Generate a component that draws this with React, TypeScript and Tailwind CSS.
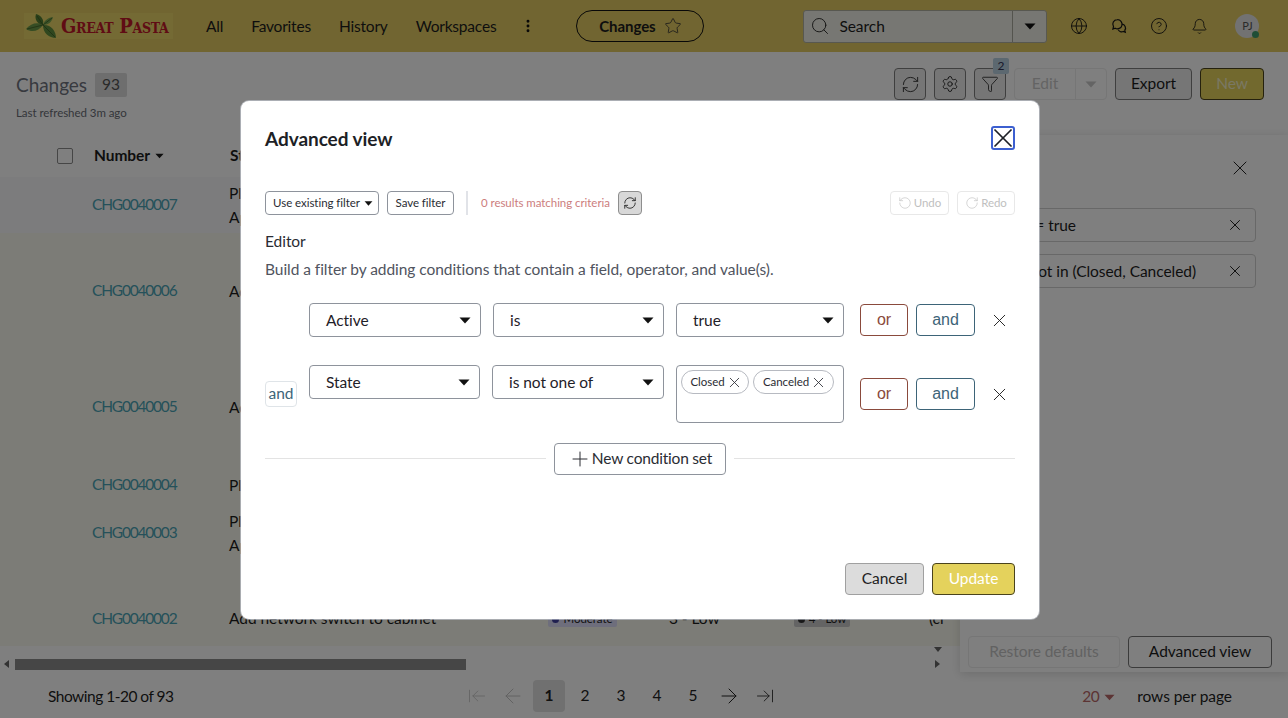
import React from 'react';
import {
  ArrowLeft,
  ArrowLeftToLine,
  ArrowRight,
  ArrowRightToLine,
  Bell,
  CircleHelp,
  EllipsisVertical,
  Funnel,
  Globe,
  Plus,
  RefreshCw,
  RotateCcw,
  RotateCw,
  Search,
  Settings,
  Star,
  X,
} from 'lucide-react';

const Caret = ({ className = '' }: { className?: string }) => (
  <svg width="12" height="7" viewBox="0 0 12 7" className={className}>
    <path d="M0.5 0.5h11L6 6.5z" fill="currentColor" />
  </svg>
);

const Logo = () => (
  <div className="flex h-[26px] w-[149px] items-center bg-[#e8d468]">
    <svg width="34" height="26" viewBox="0 0 34 26" className="ml-[1px] shrink-0">
      <path d="M1 16C6 10 13 9 18 12C14 18 7 20 1 16z" fill="#6c9a48" />
      <path d="M11 1C17 3 19 7 18 12C13 11 9 7 11 1z" fill="#527f34" />
      <path d="M28 4C27 9 23 12 18 12C19 8 22 5 28 4z" fill="#76a450" />
      <path d="M18 12C25 11 31 17 31 25C24 25 18 20 18 12z" fill="#5f8e3e" />
      <path d="M2 16L18 12L30 24M18 12L12 3M18 12L27 5" stroke="#38591f" strokeWidth="0.7" fill="none" />
    </svg>
    <span className="ml-[2px] font-['DejaVu_Serif_Condensed','Liberation_Serif',serif] text-[20px] leading-none font-bold tracking-[-0.3px] whitespace-nowrap text-[#c01828] [font-variant:small-caps]">
      Great Pasta
    </span>
  </div>
);

const NavLink = ({ children }: { children: React.ReactNode }) => (
  <span className="leading-6 text-[#1d1d1d]">{children}</span>
);

const HeaderIcon = ({ children }: { children: React.ReactNode }) => (
  <span className="flex h-4 w-4 items-center justify-center text-[#141414]">{children}</span>
);

const ChatIcon = () => (
  <svg width="16" height="16" viewBox="0 0 16 16" fill="none" stroke="#141414" strokeWidth="1.2" className="shrink-0">
    <path d="M6.3 1.6a4.6 4.6 0 0 0-3.8 7.1L1.9 11l2.3-.8a4.6 4.6 0 1 0 2.1-8.6z" />
    <path d="M11 6.2a3.8 3.8 0 0 1 2.8 6l.5 2-2-.7a3.8 3.8 0 0 1-5-1.8" />
  </svg>
);

const IconButton = ({ children }: { children: React.ReactNode }) => (
  <button className="flex h-8 w-8 items-center justify-center rounded-[4px] border border-[#7e7e7e] bg-[#ededed] text-[#222]">
    {children}
  </button>
);

// Row text sits mostly behind the dialog, only the first letters show
const rows = [
  { num: 'CHG0040007', h: 'h-[56px] bg-[#f8f8fa]', lines: ['Plan', 'App'] },
  { num: 'CHG0040006', h: 'h-[116px] bg-[#f9f9ee]', lines: ['Add'] },
  { num: 'CHG0040005', h: 'h-[116px] bg-[#f9f9ee]', lines: ['Add'] },
  { num: 'CHG0040004', h: 'h-[40px] bg-[#f9f9ee]', lines: ['Plan'] },
  { num: 'CHG0040003', h: 'h-[56px] bg-[#f9f9ee]', lines: ['Plan', 'App'] },
];

const SelectBox = ({ label, className }: { label: string; className: string }) => (
  <div className={`flex h-[34px] shrink-0 items-center justify-between rounded-[4px] border border-[#8e939c] bg-white pr-[9px] pl-4 text-[#1f2128] ${className}`}>
    <span className="pt-[2px]">{label}</span>
    <Caret className="text-[#111]" />
  </div>
);

const OrAnd = () => (
  <div className="ml-4 flex shrink-0 gap-2 font-['Liberation_Sans',sans-serif] text-[16px] tracking-normal">
    <button className="h-8 w-12 rounded-[4px] border border-[#8a4a3c] text-[#8a4a3c]">or</button>
    <button className="h-8 w-[59px] rounded-[4px] border border-[#3d6478] text-[#3d6478]">and</button>
  </div>
);

const RemoveRow = () => (
  <button className="ml-4 flex h-4 w-4 items-center justify-center text-[#222]">
    <X size={21} strokeWidth={1.1} className="shrink-0" />
  </button>
);

const Chip = ({ label, className }: { label: string; className: string }) => (
  <span className={`flex h-6 items-center justify-center rounded-full border border-[#b7bac1] text-[11.5px] text-[#2a2c33] ${className}`}>
    {label}
    <X size={17} strokeWidth={1.2} className="-mr-[3px] ml-[1px] shrink-0" />
  </span>
);

export default function App() {
  return (
    <div className="relative flex h-[718px] w-full flex-col overflow-hidden bg-white font-['Lato',sans-serif] text-[15.5px] tracking-[-0.05px] text-[#1d1d1d]">
      {/* Top bar */}
      <header className="flex h-[52px] shrink-0 items-center bg-[#e2ca62] pl-6">
        <Logo />
        <nav className="ml-[33px] flex items-center gap-7 tracking-[-0.2px]">
          <NavLink>All</NavLink>
          <NavLink>Favorites</NavLink>
          <NavLink>History</NavLink>
          <NavLink>Workspaces</NavLink>
          <EllipsisVertical size={16} strokeWidth={2.4} className="-ml-[4px] text-[#111]" />
        </nav>
        <div className="ml-10 flex h-[32px] w-[128px] items-center justify-center gap-2 rounded-full border border-[#111] text-[15px] font-bold">
          Changes
          <Star size={18} strokeWidth={1.1} className="text-[#333]" />
        </div>
        <div className="ml-[99px] flex h-[33px] w-[244px] items-center rounded-[3px] border border-[#b0b0a0] bg-[#efefe6]">
          <Search size={20} strokeWidth={1.1} className="ml-[6px] text-[#222]" />
          <span className="ml-[9px] flex-1 pt-[2px]">Search</span>
          <div className="flex h-full w-[34px] items-center justify-center border-l border-[#a9a99c]">
            <Caret className="text-[#111]" />
          </div>
        </div>
        <div className="ml-6 flex items-center gap-6">
          <HeaderIcon>
            <Globe size={18} strokeWidth={1.2} className="shrink-0" />
          </HeaderIcon>
          <HeaderIcon>
            <ChatIcon />
          </HeaderIcon>
          <HeaderIcon>
            <CircleHelp size={18} strokeWidth={1.2} className="shrink-0" />
          </HeaderIcon>
          <HeaderIcon>
            <Bell size={17} strokeWidth={1.2} className="shrink-0" />
          </HeaderIcon>
        </div>
        <div className="relative ml-7 flex h-6 w-6 items-center justify-center rounded-full bg-[#e4e4e4] text-[11px] text-[#555]">
          PJ
          <span className="absolute right-0 bottom-0 h-[7px] w-[7px] rounded-full bg-[#3f9c6c]" />
        </div>
      </header>

      {/* Page heading */}
      <div className="flex h-[83px] shrink-0 items-start justify-between pt-4 pr-6 pl-4">
        <div>
          <div className="mt-[5px] flex items-center gap-2">
            <span className="text-[19px] leading-6 text-[#70747e]">Changes</span>
            <span className="flex h-6 w-8 items-center justify-center rounded-[2px] bg-[#dcdcdc] text-[#555]">93</span>
          </div>
          <p className="mt-2 text-[11.5px] leading-4 text-[#6a6d75]">Last refreshed 3m ago</p>
        </div>
        <div className="flex items-center gap-2">
          <IconButton>
            <RefreshCw size={19} strokeWidth={1.1} />
          </IconButton>
          <IconButton>
            <Settings size={18} strokeWidth={1.2} />
          </IconButton>
          <div className="relative">
            <IconButton>
              <Funnel size={18} strokeWidth={1.1} />
            </IconButton>
            <span className="absolute -top-[10px] left-[19px] flex h-4 w-4 items-center justify-center rounded-[2px] bg-[#b8d0e0] text-[12px] text-[#335]">2</span>
          </div>
          <div className="flex h-8 w-[93px] items-center rounded-[4px] border border-[#ececec] text-[#c8c8c8]">
            <span className="w-[60px] text-center">Edit</span>
            <div className="flex h-full flex-1 items-center justify-center border-l border-[#ececec]">
              <Caret className="text-[#c8c8c8]" />
            </div>
          </div>
          <button className="h-8 w-[77px] rounded-[4px] border border-[#7e7e7e] bg-[#ededed]">Export</button>
          <button className="h-8 w-16 rounded-[4px] border border-[#4a431c] bg-[#e4d25c] text-[#f4f0c8]">New</button>
        </div>
      </div>

      {/* Table */}
      <div className="relative flex-1">
        <div className="flex h-[42px] items-center pl-[57px]">
          <span className="h-4 w-4 rounded-[2px] border border-[#8c8c8c] bg-white" />
          <span className="ml-[21px] flex items-center gap-[5px] font-bold">
            Number <Caret className="h-[6px] w-[9px]" />
          </span>
          <span className="ml-[66px] font-bold">State</span>
        </div>
        {rows.map(row => (
          <div key={row.num} className={`flex items-center pl-[92px] ${row.h}`}>
            <span className="w-[137px] tracking-[-1.2px] text-[#4aa3b5]">{row.num}</span>
            <div className="leading-6">
              {row.lines.map(line => (
                <div key={line}>{line}</div>
              ))}
            </div>
          </div>
        ))}
        <div className="flex h-[85px] items-center bg-[#f9f9ee] pt-[31px] pl-[92px]">
          <span className="w-[137px] tracking-[-1.2px] text-[#4aa3b5]">CHG0040002</span>
          <span className="w-[319px] whitespace-nowrap">Add network switch to cabinet</span>
          <span className="flex h-4 w-[69px] items-center justify-center gap-1 rounded-[2px] bg-[#dcdcf8] text-[11.5px]">
            <span className="h-[7px] w-[7px] rounded-full bg-[#4040a0]" /> Moderate
          </span>
          <span className="ml-[52px] w-[125px] whitespace-nowrap">3 - Low</span>
          <span className="flex h-4 w-[56px] items-center justify-center gap-1 rounded-[2px] bg-[#c8c8c8] text-[11.5px]">
            <span className="h-[7px] w-[7px] rounded-full bg-[#333]" /> 4 - Low
          </span>
          <span className="ml-[79px]">(cr</span>
        </div>

        {/* Horizontal scrollbar */}
        <div className="relative flex h-[26px] items-end pb-[2px]">
          <svg width="6" height="8" viewBox="0 0 6 8" className="absolute bottom-[4px] left-[4px] text-[#666]">
            <path d="M5 0v8L0 4z" fill="currentColor" />
          </svg>
          <div className="ml-[15px] h-[11px] w-[451px] bg-[#8c8c8c]" />
          <svg width="8" height="6" viewBox="0 0 8 6" className="absolute top-[1px] left-[934px] text-[#666]">
            <path d="M0 0h8L4 5z" fill="currentColor" />
          </svg>
          <svg width="6" height="8" viewBox="0 0 6 8" className="absolute bottom-[4px] left-[935px] text-[#666]">
            <path d="M0 0v8l5-4z" fill="currentColor" />
          </svg>
        </div>

        {/* Filter side panel */}
        <aside className="absolute top-0 right-0 bottom-0 flex w-[328px] flex-col bg-white pr-4 pl-2 shadow-[0_2px_10px_rgba(0,0,0,0.15)]">
          <X size={24} strokeWidth={1} className="mt-[21px] mr-5 self-end text-[#222]" />
          <div className="mt-7 mr-4 flex h-[34px] items-center justify-end rounded-[4px] border border-[#d0d0d0] pr-[11px]">
            <span className="mr-[150px] pt-[2px]">Active = true</span>
            <X size={18} strokeWidth={1.3} />
          </div>
          <div className="mt-3 mr-4 flex h-[34px] items-center justify-end rounded-[4px] border border-[#d0d0d0] pr-[11px]">
            <span className="mr-[30px] pt-[2px]">State not in (Closed, Canceled)</span>
            <X size={18} strokeWidth={1.3} />
          </div>
          <div className="mt-auto mb-1 flex gap-2">
            <button className="h-8 w-[152px] rounded-[4px] border border-[#ececec] text-[#c4c4c4]">Restore defaults</button>
            <button className="h-8 w-[144px] rounded-[4px] border border-[#777]">Advanced view</button>
          </div>
        </aside>
      </div>

      {/* Pagination */}
      <footer className="flex h-[46px] shrink-0 items-center pt-[2px] pr-14 pl-12">
        <span className="mt-[2px] w-[413px] tracking-[-0.5px]">Showing 1-20 of 93</span>
        <div className="flex items-center text-[#222]">
          <span className="flex h-8 w-8 items-center justify-center text-[#c4c4c4]"><ArrowLeftToLine size={20} strokeWidth={1} /></span>
          <span className="ml-1 flex h-8 w-8 items-center justify-center text-[#c4c4c4]"><ArrowLeft size={24} strokeWidth={1} /></span>
          <span className="ml-1 flex h-8 w-8 items-center justify-center rounded-[4px] bg-[#e0e0e0] font-bold">1</span>
          <span className="ml-1 flex h-8 w-8 items-center justify-center">2</span>
          <span className="ml-1 flex h-8 w-8 items-center justify-center">3</span>
          <span className="ml-1 flex h-8 w-8 items-center justify-center">4</span>
          <span className="ml-1 flex h-8 w-8 items-center justify-center">5</span>
          <span className="ml-1 flex h-8 w-8 items-center justify-center"><ArrowRight size={24} strokeWidth={1} /></span>
          <span className="ml-1 flex h-8 w-8 items-center justify-center"><ArrowRightToLine size={20} strokeWidth={1} /></span>
        </div>
        <div className="mt-[2px] ml-auto flex items-center">
          <span className="flex items-center gap-[5px] tracking-[-0.5px] text-[#b86868]">
            20 <Caret className="h-[7px] w-[11px]" />
          </span>
          <span className="ml-[22px]">rows per page</span>
        </div>
      </footer>

      {/* Modal */}
      <div className="absolute inset-0 flex items-center justify-center bg-black/50 pt-[2px] pr-2">
        <div className="flex h-[518px] w-[798px] flex-col rounded-[8px] bg-white px-6 pt-[25px] pb-6 shadow-[0_0_0_1px_rgba(200,205,215,0.6)]">
          <div className="flex h-6 items-center justify-between">
            <h2 className="pt-[2px] text-[19px] font-bold text-[#1d1f26]">Advanced view</h2>
            <button className="flex h-6 w-6 items-center justify-center rounded-[3px] border-2 border-[#3c5fd0] text-[#1d1f26]">
              <X size={32} strokeWidth={1.3} className="shrink-0" />
            </button>
          </div>

          <div className="mt-[41px] flex h-6 items-center text-[11.5px]">
            <button className="flex h-6 w-[114px] items-center justify-center gap-[4px] rounded-[4px] border border-[#8e939c] pl-[2px] text-[#2a2c33]">
              Use existing filter <Caret className="h-[5px] w-[9px] text-[#111]" />
            </button>
            <button className="ml-2 h-6 w-[67px] rounded-[4px] border border-[#8e939c] text-[#2a2c33]">Save filter</button>
            <span className="mr-[13px] ml-3 h-6 w-[2px] bg-[#e1e3e8]" />
            <span className="w-[129px] whitespace-nowrap text-[#cc7d7d]">0 results matching criteria</span>
            <button className="ml-2 flex h-6 w-6 items-center justify-center rounded-[4px] border border-[#8e8e8e] bg-[#d8d8d8] text-[#222]">
              <RefreshCw size={14} strokeWidth={1.5} />
            </button>
            <button className="ml-auto flex h-6 w-[59px] items-center justify-center gap-[2px] rounded-[4px] border border-[#e8e8e8] text-[#c0c0c0]">
              <RotateCcw size={14} strokeWidth={1.1} /> Undo
            </button>
            <button className="ml-2 flex h-6 w-[58px] items-center justify-center gap-[2px] rounded-[4px] border border-[#e8e8e8] text-[#c0c0c0]">
              <RotateCw size={14} strokeWidth={1.1} /> Redo
            </button>
          </div>

          <h3 className="mt-[14px] leading-6 text-[#2a2c33]">Editor</h3>
          <p className="mt-1 leading-6 text-[#50545e]">Build a filter by adding conditions that contain a field, operator, and value(s).</p>

          {/* Condition rows */}
          <div className="mt-[22px] flex items-center">
            <div className="w-8 shrink-0" />
            <SelectBox label="Active" className="ml-3 w-[172px]" />
            <SelectBox label="is" className="ml-3 w-[171px]" />
            <SelectBox label="true" className="ml-3 w-[168px]" />
            <OrAnd />
            <RemoveRow />
          </div>
          <div className="mt-[28px] flex items-center">
            <span className="flex h-[26px] w-8 shrink-0 items-center justify-center rounded-[4px] border border-[#dfe4e8] text-[#3d6478]">and</span>
            <SelectBox label="State" className="ml-3 w-[171px] self-start" />
            <SelectBox label="is not one of" className="ml-3 w-[172px] self-start" />
            <div className="ml-3 flex h-[58px] w-[168px] shrink-0 items-start gap-1 rounded-[4px] border border-[#8e939c] px-1 pt-1">
              <Chip label="Closed" className="w-[68px]" />
              <Chip label="Canceled" className="w-[81px]" />
            </div>
            <OrAnd />
            <RemoveRow />
          </div>

          <div className="mt-5 flex items-center gap-2">
            <div className="mb-[2px] h-px flex-1 bg-[#e3e3e3]" />
            <button className="flex h-8 w-[172px] items-center justify-center rounded-[4px] border border-[#8e939c] tracking-[-0.2px] text-[#2a2c33]">
              <Plus size={24} strokeWidth={1} /> New condition set
            </button>
            <div className="mb-[2px] h-px flex-1 bg-[#e3e3e3]" />
          </div>

          <div className="mt-auto flex justify-end gap-2">
            <button className="h-8 w-[79px] rounded-[4px] border border-[#a0a0a0] bg-[#dcdcdc] text-[#222]">Cancel</button>
            <button className="h-8 w-[83px] rounded-[4px] border border-[#4a431c] bg-[#e4d25c] text-white">Update</button>
          </div>
        </div>
      </div>
    </div>
  );
}
